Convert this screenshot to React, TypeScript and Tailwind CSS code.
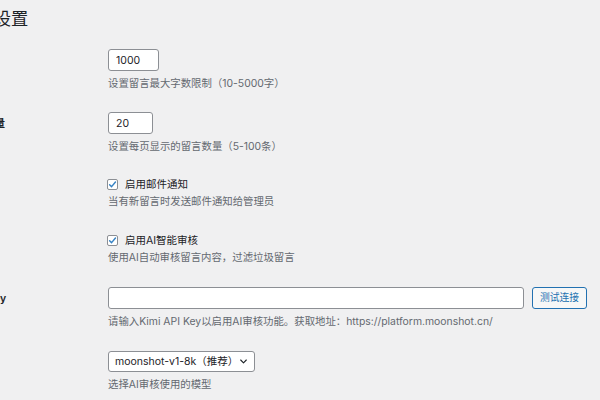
import React from "react";

function Label({ text, pt }: { text: string; pt: string }) {
  return (
    <div className={`w-[166px] shrink-0 font-semibold text-[10.5px] leading-[15px] whitespace-nowrap ${pt}`}>
      {text}
    </div>
  );
}

function Desc({ children, mt }: { children: React.ReactNode; mt: string }) {
  return <p className={`${mt} text-[10.4px] leading-[15px] text-[#646970] whitespace-nowrap`}>{children}</p>;
}

function Check({ label }: { label: string }) {
  return (
    <div className="flex items-center h-[15px] ml-[-1px]">
      <span className="w-[11px] h-[11px] rounded-[2px] border border-[#8c8f94] bg-white flex items-center justify-center">
        <svg width="9" height="9" viewBox="0 0 10 10" fill="none">
          <path d="M1.8 5.2 L4 7.4 L8.3 2.3" stroke="#3582c4" strokeWidth="1.6" strokeLinecap="round" strokeLinejoin="round" />
        </svg>
      </span>
      <span className="ml-[7px] text-[10.5px] leading-[15px]">{label}</span>
    </div>
  );
}

export default function App() {
  return (
    <div className="w-[600px] h-[400px] overflow-hidden bg-[#f0f0f1] text-[#1d2327] font-['Inter','Noto_Sans_CJK_SC',sans-serif]">
      <div className="ml-[-58px] w-[700px]">
        <h1 className="pt-[7px] text-[17.25px] leading-[24px] font-normal">留言板设置</h1>

        <div className="flex mt-[18px]">
          <Label text="最大字数" pt="pt-[4px]" />
          <div>
            <input
              readOnly
              value="1000"
              className="block w-[51px] h-[22px] px-[7px] bg-white border border-[#8c8f94] rounded-[3px] text-[10.5px] text-[#1d2327] outline-none"
            />
            <Desc mt="mt-[4.5px]">设置留言最大字数限制（10-5000字）</Desc>
          </div>
        </div>

        <div className="flex mt-[21.5px]">
          <Label text="每页显示数量" pt="pt-[4px]" />
          <div>
            <input
              readOnly
              value="20"
              className="block w-[45px] h-[22px] px-[7px] bg-white border border-[#8c8f94] rounded-[3px] text-[10.5px] text-[#1d2327] outline-none"
            />
            <Desc mt="mt-[4.5px]">设置每页显示的留言数量（5-100条）</Desc>
          </div>
        </div>

        <div className="flex mt-[23px]">
          <Label text="邮件通知" pt="pt-0" />
          <div>
            <Check label="启用邮件通知" />
            <Desc mt="mt-[2px]">当有新留言时发送邮件通知给管理员</Desc>
          </div>
        </div>

        <div className="flex mt-[24px]">
          <Label text="AI审核" pt="pt-0" />
          <div>
            <Check label="启用AI智能审核" />
            <Desc mt="mt-[2px]">使用AI自动审核留言内容，过滤垃圾留言</Desc>
          </div>
        </div>

        <div className="flex mt-[22.5px]">
          <Label text="Kimi API Key" pt="pt-[4px]" />
          <div>
            <div className="flex items-center">
              <input
                readOnly
                value=""
                className="block w-[416px] h-[22px] px-[7px] bg-white border border-[#8c8f94] rounded-[3px] text-[10.5px] outline-none"
              />
              <button className="ml-[8px] h-[22px] px-[7px] bg-[#f6f7f7] border border-[#2271b1] rounded-[3px] text-[9.75px] leading-[20px] text-[#2271b1] whitespace-nowrap">
                测试连接
              </button>
            </div>
            <Desc mt="mt-[4.5px]">请输入Kimi API Key以启用AI审核功能。获取地址：https://platform.moonshot.cn/</Desc>
          </div>
        </div>

        <div className="flex mt-[22.5px]">
          <Label text="AI模型" pt="pt-[3px]" />
          <div>
            <div className="w-[147px] h-[21px] bg-white border border-[#8c8f94] rounded-[3px] flex items-center pl-[6px] pr-[7px]">
              <span className="text-[10.5px] leading-[15px] whitespace-nowrap">moonshot-v1-8k（推荐）</span>
              <svg className="ml-auto" width="7" height="5" viewBox="0 0 7 5" fill="none">
                <path d="M0.7 1 L3.5 3.8 L6.3 1" stroke="#1d2327" strokeWidth="1.1" strokeLinecap="round" strokeLinejoin="round" />
              </svg>
            </div>
            <Desc mt="mt-[4.5px]">选择AI审核使用的模型</Desc>
          </div>
        </div>
      </div>
    </div>
  );
}
